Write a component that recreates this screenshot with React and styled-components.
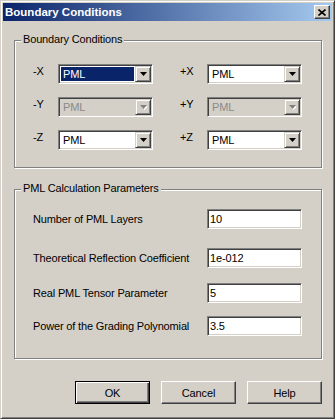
import React from "react";
import styled, { createGlobalStyle, css } from "styled-components";

const FACE = "#d4d0c8";
const SHADOW = "#808080";
const DARK = "#404040";

const GlobalStyle = createGlobalStyle`
  html, body {
    margin: 0;
    padding: 0;
    background: ${FACE};
  }
  body {
    font-family: "Liberation Sans", Arial, sans-serif;
    font-size: 11px;
  }
`;

const Window = styled.div`
  box-sizing: border-box;
  width: 335px;
  height: 419px;
  display: flex;
  flex-direction: column;
  background: ${FACE};
  border: 1px solid;
  border-color: ${FACE} ${DARK} ${DARK} ${FACE};
  box-shadow: inset 1px 1px 0 #fff, inset -1px -1px 0 ${SHADOW};
  padding: 2px;
  color: #000;
  letter-spacing: -0.15px;
`;

const TitleBar = styled.div`
  height: 18px;
  display: flex;
  align-items: center;
  justify-content: space-between;
  padding: 0 2px;
  background: linear-gradient(to right, #0a246a, #a6caf0);
`;

const Title = styled.span`
  color: #fff;
  font-weight: bold;
  font-size: 11.5px;
  letter-spacing: 0;
`;

const CloseButton = styled.button`
  box-sizing: border-box;
  width: 16px;
  height: 14px;
  padding: 0;
  display: flex;
  align-items: center;
  justify-content: center;
  background: ${FACE};
  border: 1px solid;
  border-color: #fff ${DARK} ${DARK} #fff;
  box-shadow: inset -1px -1px 0 ${SHADOW};
`;

const Body = styled.div`
  flex: 1;
  display: flex;
  flex-direction: column;
  padding: 19px 10px 0 11px;
`;

const Group = styled.div`
  position: relative;
  border: 1px solid ${SHADOW};
  box-shadow: inset 1px 1px 0 #fff, 1px 1px 0 #fff;
  margin-top: ${(p) => p.$top || 0}px;
  padding: ${(p) => p.$pad};
`;

const Legend = styled.span`
  position: absolute;
  top: -8px;
  left: 6px;
  padding: 0 2px;
  line-height: 13px;
  background: ${FACE};
`;

const BoundaryGrid = styled.div`
  display: grid;
  grid-template-columns: 120px 122px;
  column-gap: 27px;
  row-gap: 13px;
`;

const BoundaryCell = styled.div`
  display: flex;
  align-items: flex-start;
`;

const AxisLabel = styled.span`
  flex: 1;
  line-height: 13px;
  margin-top: 1px;
`;

const sunken = css`
  box-sizing: border-box;
  border: 1px solid;
  border-color: ${SHADOW} #fff #fff ${SHADOW};
  box-shadow: inset 1px 1px 0 ${DARK}, inset -1px -1px 0 ${FACE};
`;

const Combo = styled.div`
  ${sunken};
  width: 95px;
  height: 20px;
  display: flex;
  padding: 1px;
  background: ${(p) => (p.$disabled ? FACE : "#fff")};
`;

const ComboValue = styled.span`
  flex: 1;
  margin: 1px;
  padding-left: 2px;
  display: flex;
  align-items: center;
  background: ${(p) => (p.$selected ? "#0a246a" : "transparent")};
  color: ${(p) => (p.$disabled ? "#8a8a8a" : p.$selected ? "#fff" : "#000")};
`;

const ArrowButton = styled.span`
  box-sizing: border-box;
  width: 16px;
  height: 16px;
  display: flex;
  align-items: center;
  justify-content: center;
  background: ${FACE};
  border: 1px solid;
  border-color: ${FACE} ${DARK} ${DARK} ${FACE};
  box-shadow: inset 1px 1px 0 #fff, inset -1px -1px 0 ${SHADOW};
`;

const ParamRow = styled.div`
  display: grid;
  grid-template-columns: 174px 95px;
  align-items: center;
  margin-top: ${(p) => p.$top}px;
`;

const ParamLabel = styled.span`
  line-height: 13px;
`;

const Field = styled.input`
  ${sunken};
  width: 95px;
  height: 20px;
  margin: 0;
  padding: 0 2px;
  background: #fff;
  font: inherit;
  letter-spacing: inherit;
  color: #000;
  outline: none;
`;

const ButtonRow = styled.div`
  display: flex;
  justify-content: flex-end;
  gap: 11px;
  margin-top: 22px;
`;

const Button = styled.button`
  box-sizing: border-box;
  width: 75px;
  height: 23px;
  padding: 0;
  font: inherit;
  letter-spacing: inherit;
  color: #000;
  background: ${FACE};
  border: 1px solid;
  border-color: #fff ${DARK} ${DARK} #fff;
  box-shadow: inset -1px -1px 0 ${SHADOW};

  ${(p) =>
    p.$default &&
    css`
      border-color: #000;
      box-shadow: inset 1px 1px 0 #fff, inset -1px -1px 0 ${DARK},
        inset -2px -2px 0 ${SHADOW};
    `}
`;

const Arrow = ({ disabled }) => (
  <svg width="7" height="5" viewBox="0 0 7 5">
    {disabled && <polygon points="1,1 8,1 4.5,5" fill="#fff" />}
    <polygon points="0,0 7,0 3.5,4" fill={disabled ? SHADOW : "#000"} />
  </svg>
);

const ComboBox = ({ value, disabled, selected }) => (
  <Combo $disabled={disabled}>
    <ComboValue $disabled={disabled} $selected={selected}>
      {value}
    </ComboValue>
    <ArrowButton>
      <Arrow disabled={disabled} />
    </ArrowButton>
  </Combo>
);

const boundaries = [
  { axis: "X", selected: true },
  { axis: "Y", disabled: true },
  { axis: "Z" },
];

const params = [
  { label: "Number of PML Layers", value: "10", top: 0 },
  { label: "Theoretical Reflection Coefficient", value: "1e-012", top: 19 },
  { label: "Real PML Tensor Parameter", value: "5", top: 15 },
  { label: "Power of the Grading Polynomial", value: "3.5", top: 13 },
];

export default function App() {
  return (
    <>
      <GlobalStyle />
      <Window>
        <TitleBar>
          <Title>Boundary Conditions</Title>
          <CloseButton aria-label="Close">
            <svg width="8" height="7" viewBox="0 0 8 7">
              <path
                d="M0.5 0.5 L7.5 6.5 M7.5 0.5 L0.5 6.5"
                stroke="#000"
                strokeWidth="1.6"
              />
            </svg>
          </CloseButton>
        </TitleBar>

        <Body>
          <Group $pad="23px 0 17px 18px">
            <Legend>Boundary Conditions</Legend>
            <BoundaryGrid>
              {boundaries.map((b) => (
                <React.Fragment key={b.axis}>
                  <BoundaryCell>
                    <AxisLabel>-{b.axis}</AxisLabel>
                    <ComboBox value="PML" disabled={b.disabled} selected={b.selected} />
                  </BoundaryCell>
                  <BoundaryCell>
                    <AxisLabel>+{b.axis}</AxisLabel>
                    <ComboBox value="PML" disabled={b.disabled} />
                  </BoundaryCell>
                </React.Fragment>
              ))}
            </BoundaryGrid>
          </Group>

          <Group $top={21} $pad="19px 0 22px 18px">
            <Legend>PML Calculation Parameters</Legend>
            {params.map((p) => (
              <ParamRow key={p.label} $top={p.top}>
                <ParamLabel>{p.label}</ParamLabel>
                <Field defaultValue={p.value} />
              </ParamRow>
            ))}
          </Group>

          <ButtonRow>
            <Button $default>OK</Button>
            <Button>Cancel</Button>
            <Button>Help</Button>
          </ButtonRow>
        </Body>
      </Window>
    </>
  );
}
